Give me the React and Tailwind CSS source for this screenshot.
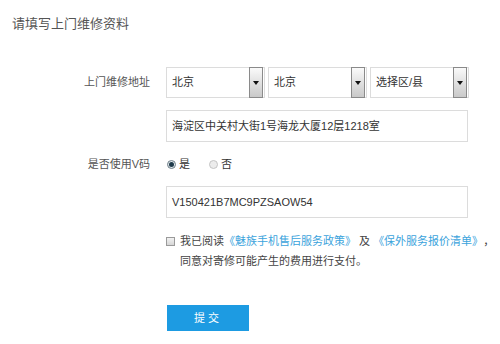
import React from 'react';

const font = { fontFamily: '"Liberation Sans", "Noto Sans CJK SC", sans-serif' };

const Select = ({ value }) => (
  <div className="relative flex items-center h-[31px] w-[99px] border border-[#dcdcdc] bg-white pl-[5px]">
    <span className="text-[11px] text-[#333]">{value}</span>
    <div className="absolute right-[1px] top-[-1px] bottom-[-1px] w-[14px] border border-[#8a8a8a] bg-gradient-to-b from-[#fafafa] to-[#c9c9c9] flex items-center justify-center">
      <div className="w-0 h-0 border-l-[3px] border-r-[3px] border-t-[4px] border-l-transparent border-r-transparent border-t-[#111]" />
    </div>
  </div>
);

const Radio = ({ checked, label }) => (
  <label className="flex items-center gap-[3px]">
    <span
      className={
        checked
          ? 'flex items-center justify-center w-[9px] h-[9px] rounded-full border border-[#6f7f88] bg-[#dfe6ea]'
          : 'w-[9px] h-[9px] rounded-full border border-[#c4c4c4] bg-[#ececec]'
      }
    >
      {checked && <span className="w-[5px] h-[5px] rounded-full bg-[#1f3a4a]" />}
    </span>
    <span className="text-[11px] text-[#333]">{label}</span>
  </label>
);

export default function App() {
  return (
    <div className="w-[500px] h-[344px] bg-white overflow-hidden [text-spacing-trim:space-all]" style={font}>
      <div className="pl-3 pt-4 text-[13px] leading-[16px] text-[#555]">请填写上门维修资料</div>

      {/* address selects */}
      <div className="flex items-center mt-[35px]">
        <div className="w-[150px] text-right text-[11px] text-[#555]">上门维修地址</div>
        <div className="ml-4 flex gap-[3px]">
          <Select value="北京" />
          <Select value="北京" />
          <Select value="选择区/县" />
        </div>
      </div>

      <div className="ml-[166px] mt-[12px] w-[302px] h-[32px] border border-[#dcdcdc] flex items-center pl-[5px] text-[11px] text-[#333]">
        海淀区中关村大街1号海龙大厦12层1218室
      </div>

      {/* V code */}
      <div className="flex items-center mt-[12px] h-[20px]">
        <div className="w-[150px] text-right text-[11px] text-[#555]">是否使用V码</div>
        <div className="ml-4 flex items-center gap-[19px] pl-[1px]">
          <Radio checked label="是" />
          <Radio label="否" />
        </div>
      </div>

      <div className="ml-[166px] mt-[12px] w-[302px] h-[32px] border border-[#dcdcdc] flex items-center pl-[5px] text-[11px] text-[#333]">
        V150421B7MC9PZSAOW54
      </div>

      {/* agreement */}
      <div className="ml-[166px] mt-[13px] flex text-[11px] leading-[20px] text-[#444]">
        <span className="mt-[6px] w-[9px] h-[9px] border border-[#9a9a9a] bg-gradient-to-b from-[#f2f2f2] to-[#d6d6d6] shrink-0" />
        <div className="ml-[5px]">
          <div className="whitespace-nowrap">
            我已阅读<span className="text-[#3ba3dc]">《魅族手机售后服务政策》</span> 及 <span className="text-[#3ba3dc]">《保外服务报价清单》</span>，
          </div>
          <div>同意对寄修可能产生的费用进行支付。</div>
        </div>
      </div>

      <button className="ml-[167px] mt-[34px] w-[82px] h-[26px] bg-[#1d9be2] text-white text-[11px] tracking-[3px] flex items-center justify-center">
        提交
      </button>
    </div>
  );
}
